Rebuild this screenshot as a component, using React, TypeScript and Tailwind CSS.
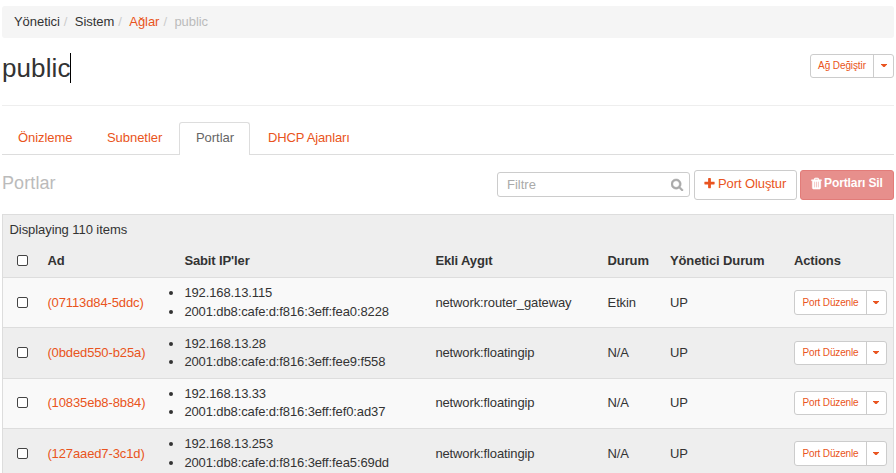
import React from "react";

const PLUS =
  "M1600 736v192q0 40-28 68t-68 28h-416v416q0 40-28 68t-68 28h-192q-40 0-68-28t-28-68v-416h-416q-40 0-68-28t-28-68v-192q0-40 28-68t68-28h416v-416q0-40 28-68t68-28h192q40 0 68 28t28 68v416h416q40 0 68 28t28 68z";
const SEARCH =
  "M1152 832q0-185-131.5-316.5t-316.5-131.5-316.5 131.5-131.5 316.5 131.5 316.5 316.5 131.5 316.5-131.5 131.5-316.5zm512 832q0 52-38 90t-90 38q-54 0-90-38l-343-342q-179 124-399 124-143 0-273.5-55.5t-225-150-150-225-55.5-273.5 55.5-273.5 150-225 225-150 273.5-55.5 273.5 55.5 225 150 150 225 55.5 273.5q0 220-124 399l343 343q37 37 37 90z";
const TRASH =
  "M704 1376v-704q0-14-9-23t-23-9h-64q-14 0-23 9t-9 23v704q0 14 9 23t23 9h64q14 0 23-9t9-23zm256 0v-704q0-14-9-23t-23-9h-64q-14 0-23 9t-9 23v704q0 14 9 23t23 9h64q14 0 23-9t9-23zm256 0v-704q0-14-9-23t-23-9h-64q-14 0-23 9t-9 23v704q0 14 9 23t23 9h64q14 0 23-9t9-23zm-544-992h448l-48-117q-7-9-17-11h-317q-10 2-17 11zm928 32v64q0 14-9 23t-23 9h-96v948q0 83-47 143.5t-113 60.5h-832q-66 0-113-58.5t-47-141.5v-952h-96q-14 0-23-9t-9-23v-64q0-14 9-23t23-9h309l70-167q15-37 54-63t79-26h320q40 0 79 26t54 63l70 167h309q14 0 23 9t9 23z";

function Icon({ d, className }: { d: string; className: string }) {
  return (
    <svg viewBox="0 0 1792 1792" fill="currentColor" stroke="currentColor" className={className}>
      <path d={d} />
    </svg>
  );
}

function SplitButton({ label, className }: { label: string; className: string }) {
  return (
    <div className={`flex shrink-0 rounded-[3px] border border-[#ccc] bg-white text-[#e95420] ${className}`}>
      <button className="flex-1 whitespace-nowrap pb-px text-center">{label}</button>
      <button className="flex w-[20px] items-center justify-center border-l border-[#ccc]" aria-label="Menu">
        <svg viewBox="0 0 6 3" className="-mt-px h-[3px] w-[6px]" fill="currentColor">
          <path d="M0 0h6v.6L3.6 3h-1.2L0 .6z" />
        </svg>
      </button>
    </div>
  );
}

function Checkbox() {
  return <span role="checkbox" aria-checked="false" className="block size-[11px] rounded-[2px] border border-[#444] bg-white" />;
}

const COLS = "grid grid-cols-[14px_30.4px_137px_251px_172.2px_62.4px_124px_100px]";

const rows = [
  { id: "(07113d84-5ddc)", v4: "192.168.13.115", v6: "2001:db8:cafe:d:f816:3eff:fea0:8228", device: "network:router_gateway", status: "Etkin", style: "h-[50px] bg-[#f9f9f9]", list: "mb-px leading-[19px]", button: "h-[25px]" },
  { id: "(0bded550-b25a)", v4: "192.168.13.28", v6: "2001:db8:cafe:d:f816:3eff:fee9:f558", device: "network:floatingip", status: "N/A", style: "h-[51px] bg-[#eee] pb-px", list: "leading-[18px]", button: "mt-px h-[24px]" },
  { id: "(10835eb8-8b84)", v4: "192.168.13.33", v6: "2001:db8:cafe:d:f816:3eff:fef0:ad37", device: "network:floatingip", status: "N/A", style: "h-[50px] bg-[#f9f9f9] pb-[2px]", list: "leading-[18px]", button: "mt-px h-[24px]" },
  { id: "(127aaed7-3c1d)", v4: "192.168.13.253", v6: "2001:db8:cafe:d:f816:3eff:fea5:69dd", device: "network:floatingip", status: "N/A", style: "h-[51px] bg-[#eee] pb-[2px]", list: "leading-[19px]", button: "mt-px h-[25px]" },
];

export default function App() {
  return (
    <div className="h-[473px] w-[896px] overflow-hidden bg-white pl-[2px] pr-[2px] pt-[6px] font-['Liberation_Sans',Arial,sans-serif] text-[13px] leading-[19px] text-[#333]">
      <nav className="flex h-[32px] items-center rounded-[3px] bg-[#f5f5f5] pb-px pl-[12px] tracking-[-0.05px]">
        <span>Yönetici</span>
        <span className="w-[15px] pl-[4px] text-[#ccc]">/</span>
        <span>Sistem</span>
        <span className="w-[15px] pl-[4px] text-[#ccc]">/</span>
        <a className="text-[#e95420]">Ağlar</a>
        <span className="w-[15px] pl-[4px] text-[#ccc]">/</span>
        <span className="text-[#bbb]">public</span>
      </nav>

      <header className="flex h-[68px] items-start justify-between border-b border-[#eee]">
        <h1 className="mt-[15px] flex h-[30px] w-[69px] items-center whitespace-nowrap border-r border-black text-[26px] leading-[30px] tracking-[0.1px]">public</h1>
        <SplitButton label="Ağ Değiştir" className="mt-[16px] h-[24px] w-[84px] text-[10px] tracking-[-0.1px]" />
      </header>

      <div className="mt-[16px] flex h-[33px] border-b border-[#ddd] tracking-[-0.05px] text-[#e95420]">
        <a className="w-[89px] pl-[16px] pt-[6px]">Önizleme</a>
        <a className="w-[88px] pl-[16px] pt-[6px]">Subnetler</a>
        <a className="h-[33px] w-[71px] rounded-t-[3px] border border-b-0 border-[#ddd] bg-white pl-[16px] pt-[5px] text-[#666]">Portlar</a>
        <a className="pl-[18px] pt-[6px] tracking-[-0.15px]">DHCP Ajanları</a>
      </div>

      <div className="flex h-[59px] items-start pt-[15px]">
        <h2 className="mt-[2px] flex-1 text-[18px] leading-[22px] tracking-[0.1px] text-[#bbb]">Portlar</h2>
        <div className="mt-[2px] flex h-[25px] w-[193px] items-center justify-between rounded-[3px] border border-[#ccc] pl-[9px] pr-[5px] text-[#aaa]">
          <span>Filtre</span>
          <Icon d={SEARCH} className="size-[13px] stroke-[60]" />
        </div>
        <button className="ml-[4px] flex h-[30px] w-[103px] items-center whitespace-nowrap rounded-[3px] border border-[#ccc] pb-[3px] pl-[8px] tracking-[-0.1px] text-[#e95420]">
          <Icon d={PLUS} className="mr-[2px] size-[13px]" />
          Port Oluştur
        </button>
        <button className="ml-[3px] flex h-[30px] w-[94px] items-center whitespace-nowrap rounded-[3px] border border-[#e27c79] bg-[#e78f8c] pb-[3px] pl-[9px] text-[12px] font-bold tracking-[-0.1px] text-white">
          <Icon d={TRASH} className="mr-[1px] size-[13px] stroke-[70]" />
          Portları Sil
        </button>
      </div>

      <div className="border border-[#ddd] bg-[#eee] tracking-[-0.12px]">
        <div className="h-[29px] pl-[6.5px] pt-[5px] tracking-[-0.07px]">Displaying 110 items</div>
        <div className={`${COLS} h-[33px] items-center font-bold`}>
          <span />
          <Checkbox />
          <span>Ad</span>
          <span>Sabit IP'ler</span>
          <span>Ekli Aygıt</span>
          <span>Durum</span>
          <span>Yönetici Durum</span>
          <span>Actions</span>
        </div>
        {rows.map((r) => (
          <div key={r.id} className={`${COLS} ${r.style} items-center border-t border-[#ddd]`}>
            <span />
            <Checkbox />
            <a className="text-[#e95420]">{r.id}</a>
            <ul className={`list-disc ${r.list}`}>
              <li>{r.v4}</li>
              <li>{r.v6}</li>
            </ul>
            <span>{r.device}</span>
            <span>{r.status}</span>
            <span>UP</span>
            <SplitButton label="Port Düzenle" className={`w-[93px] text-[10px] tracking-[-0.15px] ${r.button}`} />
          </div>
        ))}
      </div>
    </div>
  );
}
